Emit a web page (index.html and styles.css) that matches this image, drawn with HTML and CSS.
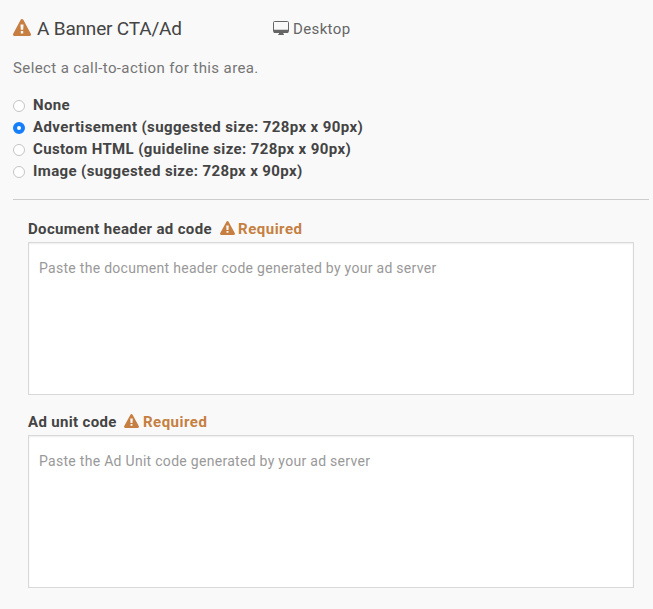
FILE: index.html
```html
<!DOCTYPE html>
<html lang="en">
<head>
<meta charset="utf-8">
<title>Banner CTA/Ad</title>
<link rel="stylesheet" href="styles.css">
</head>
<body>
<svg class="defs" aria-hidden="true">
  <symbol id="warning" viewBox="0 0 18 17">
    <path fill-rule="evenodd" d="M7.7.8a1.5 1.5 0 0 1 2.6 0l7.5 13.9A1.5 1.5 0 0 1 16.6 17H1.4A1.5 1.5 0 0 1 .2 14.7ZM7.5 5.5l.3 5.3h2.4l.3-5.3ZM7.8 12v2.4h2.4V12Z"/>
  </symbol>
</svg>
<main class="panel">
  <header class="heading">
    <h1 class="title"><svg class="title-icon"><use href="#warning"/></svg><span class="title-text">A Banner CTA/Ad</span></h1>
    <div class="device"><svg class="monitor" viewBox="0 0 16 14"><rect x=".5" y=".5" width="15" height="11" rx="1" fill="none" stroke="currentColor"/><path d="M1 8.7h14V12h-4.6v1.2H11v.8H5v-.8h1V12H1Z"/></svg><span class="device-text">Desktop</span></div>
  </header>
  <p class="intro"><span>Select a call-to-action for this area.</span></p>
  <div class="options">
    <label class="option"><input type="radio" name="cta"><span>None</span></label>
    <label class="option"><input type="radio" name="cta" checked><span>Advertisement (suggested size: 728px x 90px)</span></label>
    <label class="option"><input type="radio" name="cta"><span>Custom HTML (guideline size: 728px x 90px)</span></label>
    <label class="option"><input type="radio" name="cta"><span>Image (suggested size: 728px x 90px)</span></label>
  </div>
  <section class="fields">
    <div class="field">
      <label class="label" for="header-code"><span>Document header ad code</span><svg class="label-icon"><use href="#warning"/></svg><span class="required">Required</span></label>
      <textarea id="header-code" placeholder="Paste the document header code generated by your ad server"></textarea>
    </div>
    <div class="field">
      <label class="label" for="unit-code"><span>Ad unit code</span><svg class="label-icon"><use href="#warning"/></svg><span class="required">Required</span></label>
      <textarea id="unit-code" placeholder="Paste the Ad Unit code generated by your ad server"></textarea>
    </div>
  </section>
</main>
</body>
</html>
```
FILE: styles.css
```css
* { box-sizing: border-box; }
body {
  margin: 0;
  background: #f9f9f9;
  color: #444;
  font: 15px/22px Roboto, "Liberation Sans", sans-serif;
}
.defs { display: block; width: 0; height: 0; }
.panel { padding: 16px 4px 0 13px; }
.heading { display: flex; height: 25px; align-items: center; }
.title { display: flex; align-items: center; width: 260px; margin: 0; font-size: 19px; font-weight: 400; line-height: 25px; }
.title-icon { width: 18px; height: 17px; margin: -2px 6px 0 0; fill: #c67f41; }
.title-text { letter-spacing: -.18px; white-space: nowrap; }
.device { display: flex; align-items: center; height: 25px; color: #666; }
.monitor { width: 16px; height: 14px; margin: -1px 4px 0 0; fill: currentColor; }
.device-text { letter-spacing: .37px; }
.intro { margin: 16px 0 0; color: #757575; letter-spacing: .39px; }
.options { margin-top: 15px; }
.option { display: flex; align-items: center; height: 22px; font-weight: 700; letter-spacing: .38px; white-space: nowrap; }
.option input {
  appearance: none;
  width: 12px;
  height: 12px;
  margin: 2px 8px 0 0;
  border: 1px solid #c5c5c5;
  border-radius: 50%;
  background: #fff;
}
.option input:checked { border: 4px solid #147efb; }
.fields { margin-top: 17px; padding: 18px 15px 0; border-top: 1px solid #ccc; }
.field { margin-bottom: 16px; }
.label { display: flex; align-items: center; height: 24px; padding-bottom: 2px; font-weight: 700; letter-spacing: .34px; }
.label-icon { width: 15px; height: 14px; margin: -2px 3.5px 0 7.7px; fill: #c67f41; }
.required { color: #c67f41; letter-spacing: .5px; }
textarea {
  display: block;
  width: 100%;
  height: 153px;
  padding: 15px 10px;
  border: 1px solid #d8d8d8;
  border-radius: 0;
  background: #fff;
  box-shadow: inset 0 1px 2px rgba(0, 0, 0, .07);
  font: 14px/20px Roboto, "Liberation Sans", sans-serif;
  letter-spacing: .29px;
  resize: none;
}
textarea::placeholder { color: #999; opacity: 1; }
```
